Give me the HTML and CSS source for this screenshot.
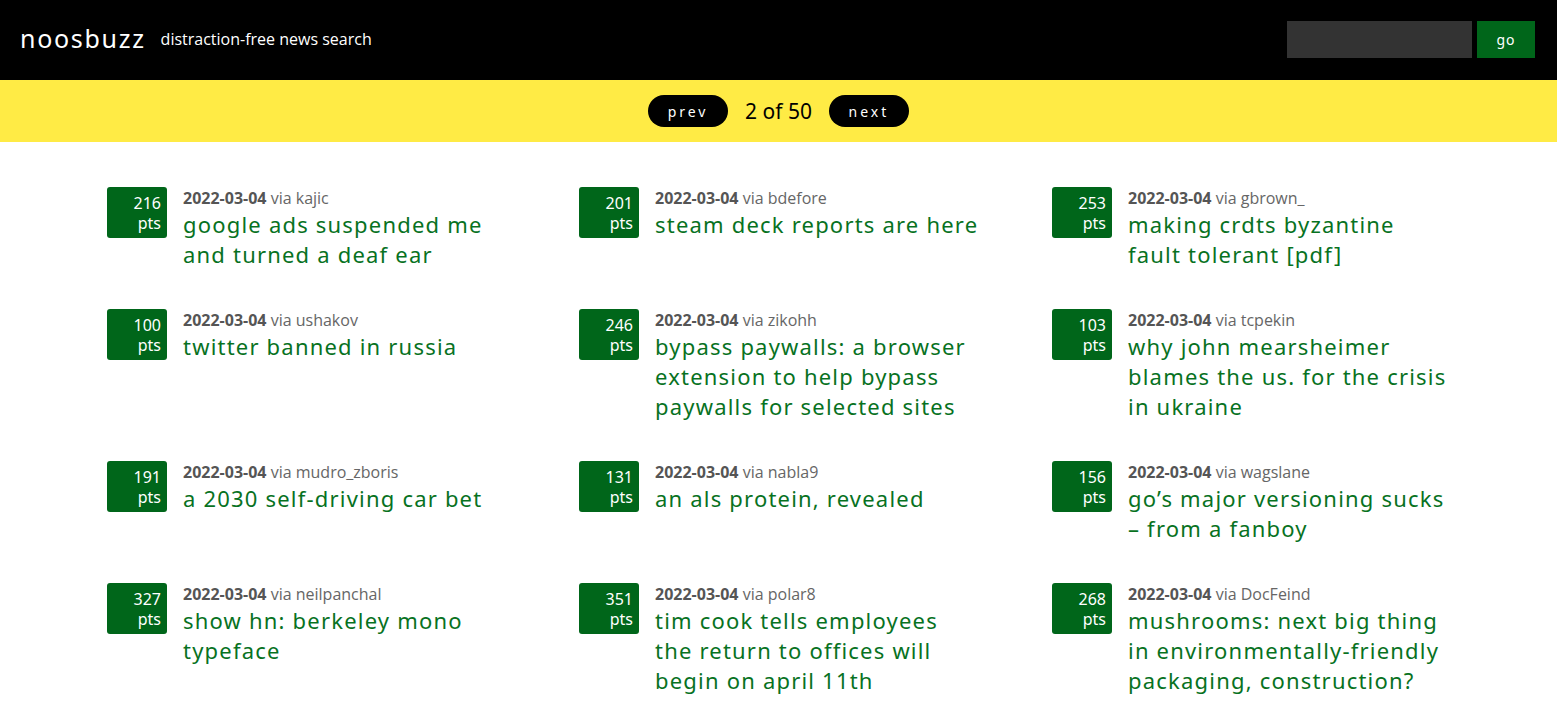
FILE: index.html
```html
<!DOCTYPE html>
<html>
<head>
<meta charset="utf-8">
<link rel="stylesheet" href="styles.css">
</head>
<body>
<header class="topbar">
  <div class="brand">
    <span class="logo">noosbuzz</span>
    <span class="tagline">distraction-free news search</span>
  </div>
  <form class="search">
    <input class="search-input" type="text">
    <button class="search-go" type="button">go</button>
  </form>
</header>
<nav class="pager">
  <span class="pill">prev</span>
  <span class="page-count">2 of 50</span>
  <span class="pill">next</span>
</nav>
<main class="grid">
  <div class="item"><div class="badge">216<br>pts</div><div class="body"><div class="meta"><b>2022-03-04</b> via kajic</div><div class="title">google ads suspended me and turned a deaf ear</div></div></div>
  <div class="item"><div class="badge">201<br>pts</div><div class="body"><div class="meta"><b>2022-03-04</b> via bdefore</div><div class="title">steam deck reports are here</div></div></div>
  <div class="item"><div class="badge">253<br>pts</div><div class="body"><div class="meta"><b>2022-03-04</b> via gbrown_</div><div class="title">making crdts byzantine fault tolerant [pdf]</div></div></div>

  <div class="item"><div class="badge">100<br>pts</div><div class="body"><div class="meta"><b>2022-03-04</b> via ushakov</div><div class="title">twitter banned in russia</div></div></div>
  <div class="item"><div class="badge">246<br>pts</div><div class="body"><div class="meta"><b>2022-03-04</b> via zikohh</div><div class="title">bypass paywalls: a browser extension to help bypass paywalls for selected sites</div></div></div>
  <div class="item"><div class="badge">103<br>pts</div><div class="body"><div class="meta"><b>2022-03-04</b> via tcpekin</div><div class="title">why john mearsheimer blames the us. for the crisis in ukraine</div></div></div>

  <div class="item"><div class="badge">191<br>pts</div><div class="body"><div class="meta"><b>2022-03-04</b> via mudro_zboris</div><div class="title">a 2030 self-driving car bet</div></div></div>
  <div class="item"><div class="badge">131<br>pts</div><div class="body"><div class="meta"><b>2022-03-04</b> via nabla9</div><div class="title">an als protein, revealed</div></div></div>
  <div class="item"><div class="badge">156<br>pts</div><div class="body"><div class="meta"><b>2022-03-04</b> via wagslane</div><div class="title">go’s major versioning sucks – from a fanboy</div></div></div>

  <div class="item"><div class="badge">327<br>pts</div><div class="body"><div class="meta"><b>2022-03-04</b> via neilpanchal</div><div class="title">show hn: berkeley mono typeface</div></div></div>
  <div class="item"><div class="badge">351<br>pts</div><div class="body"><div class="meta"><b>2022-03-04</b> via polar8</div><div class="title">tim cook tells employees the return to offices will begin on april 11th</div></div></div>
  <div class="item"><div class="badge">268<br>pts</div><div class="body"><div class="meta"><b>2022-03-04</b> via DocFeind</div><div class="title">mushrooms: next big thing in environmentally-friendly packaging, construction?</div></div></div>
</main>
</body>
</html>
```
FILE: styles.css
```css
* { box-sizing: border-box; }
body {
  margin: 0;
  background: #fff;
  font-family: "Open Sans", sans-serif;
}
.topbar {
  background: #000;
  height: 80px;
  display: flex;
  align-items: center;
  justify-content: space-between;
  padding: 0 22px 2px 20px;
}
.brand {
  display: flex;
  align-items: center;
  gap: 15px;
}
.logo {
  color: #fff;
  font-family: "Noto Sans", sans-serif;
  font-size: 25px;
  letter-spacing: 1.7px;
  position: relative;
  top: -1px;
}
.tagline {
  color: #fff;
  font-size: 16px;
}
.search {
  display: flex;
  gap: 5px;
  margin: 0;
}
.search-input {
  width: 185px;
  height: 37px;
  background: #333;
  border: none;
  outline: none;
}
.search-go {
  width: 58px;
  height: 37px;
  background: #00661a;
  color: #fff;
  border: none;
  font-family: "Noto Sans", sans-serif;
  font-size: 14px;
  letter-spacing: 1px;
}
.pager {
  background: #ffeb45;
  height: 62px;
  display: flex;
  align-items: center;
  justify-content: center;
  gap: 17px;
}
.pill {
  background: #000;
  color: #fff;
  width: 80px;
  height: 32px;
  border-radius: 16px;
  display: flex;
  align-items: center;
  justify-content: center;
  font-family: "Noto Sans", sans-serif;
  font-size: 14px;
  letter-spacing: 3px;
}
.page-count {
  font-family: "Noto Sans", sans-serif;
  font-size: 21px;
  color: #000;
}
.grid {
  display: grid;
  grid-template-columns: 472px 473px 472px;
  padding: 45px 0 0 107px;
  row-gap: 40px;
}
.item {
  display: flex;
  gap: 16px;
}
.badge {
  flex: none;
  width: 60px;
  height: 51px;
  background: #00661a;
  border-radius: 3px;
  color: #fff;
  text-align: right;
  padding: 6px 6px 0 0;
  font-family: "Noto Sans", sans-serif;
  font-size: 16px;
  line-height: 20px;
}
.body {
  width: 324px;
  padding-top: 1px;
}
.meta {
  color: #666;
  font-size: 16px;
  line-height: 21px;
}
.meta b { color: #555; font-weight: 700; }
.title {
  color: #08721f;
  font-family: "Noto Sans", sans-serif;
  font-size: 22px;
  line-height: 30px;
  letter-spacing: 1.2px;
}
```
